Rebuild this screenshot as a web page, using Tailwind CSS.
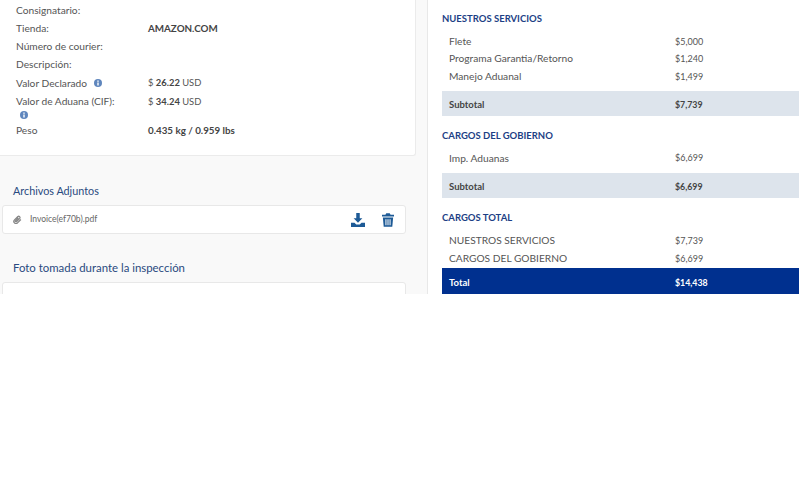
<!DOCTYPE html>
<html lang="es">
<head>
<meta charset="utf-8">
<script src="https://cdn.jsdelivr.net/npm/@tailwindcss/browser@4"></script>
</head>
<body class="bg-white font-['Lato','Noto_Sans',sans-serif] text-[10.2px] text-[#555]">
<div class="flex h-[294px] w-[799px] overflow-hidden">
  <div class="w-[428px] shrink-0 border-r border-[#e8e8e8] bg-[#f9f9f9]">
    <div class="h-[156px] w-[416px] rounded-br-[3px] border-r border-b border-[#ebebeb] bg-white pl-4 pt-[1px]">
      <div class="grid grid-cols-[132px_1fr] auto-rows-[18.3px] items-center">
        <div>Consignatario:</div><div></div>
        <div>Tienda:</div><div class="text-[9.8px] font-bold text-[#444]">AMAZON.COM</div>
        <div>Número de courier:</div><div></div>
        <div>Descripción:</div><div></div>
        <div class="flex items-center gap-[6px]">Valor Declarado
          <svg class="ml-[1px] h-2 w-2" viewBox="0 0 16 16"><circle cx="8" cy="8" r="8" fill="#5f86bd"/><rect x="6.6" y="7" width="2.8" height="6" fill="#fff"/><rect x="6.6" y="3" width="2.8" height="2.6" fill="#fff"/></svg>
        </div>
        <div class="text-[9.4px]">$ <span class="font-bold text-[#444]">26.22</span> USD</div>
        <div>Valor de Aduana (CIF):</div>
        <div class="text-[9.4px]">$ <span class="font-bold text-[#444]">34.24</span> USD</div>
        <div class="-mt-[7px] h-[10px] pl-[4px]">
          <svg class="h-2 w-2" viewBox="0 0 16 16"><circle cx="8" cy="8" r="8" fill="#5f86bd"/><rect x="6.6" y="7" width="2.8" height="6" fill="#fff"/><rect x="6.6" y="3" width="2.8" height="2.6" fill="#fff"/></svg>
        </div><div></div>
        <div class="-mt-[15px]">Peso</div><div class="-mt-[15px] text-[9.8px] font-bold text-[#444]">0.435 kg / 0.959 lbs</div>
      </div>
    </div>
    <h3 class="mt-[27px] pl-[13px] text-[10.8px] leading-[16px] text-[#2a4a80]">Archivos Adjuntos</h3>
    <div class="mt-[6px] ml-[2px] flex h-[29px] w-[404px] items-center rounded-[3px] border border-[#e8e8e8] bg-white pl-[10px] pr-[11px]">
      <svg class="h-[9px] w-[9px] text-[#888]" viewBox="0 0 24 24" fill="none" stroke="currentColor" stroke-width="3.4"><path d="M21 12l-9 9a5.5 5.5 0 0 1-8-8l9-9a3.6 3.6 0 0 1 5 5l-9 9a1.8 1.8 0 0 1-2.5-2.5l8-8"/></svg>
      <span class="ml-[8px] text-[8.5px] text-[#666]">Invoice(ef70b).pdf</span>
      <svg class="ml-auto h-[14px] w-[14px] text-[#1d5a96]" viewBox="0 0 16 16" fill="currentColor"><path d="M6 0h4v6h3l-5 5-5-5h3z"/><path d="M0 11h4l2 2h4l2-2h4v5H0z"/></svg>
      <svg class="ml-[17px] h-[14px] w-[12px] text-[#1d5a96]" viewBox="0 0 14 16" fill="currentColor"><path d="M5 0h4l1 2h4v2H0V2h4z"/><path fill-rule="evenodd" d="M1 5h12l-1 11H2zm3 2v7h1.2V7zm2.4 0v7h1.2V7zm2.4 0v7H10V7z"/></svg>
    </div>
    <h3 class="mt-[26px] pl-[13px] text-[11.4px] leading-[16px] text-[#2a4a80]">Foto tomada durante la inspección</h3>
    <div class="mt-[6px] ml-[2px] h-[40px] w-[404px] rounded-[3px] border border-[#e8e8e8] bg-white"></div>
  </div>
  <div class="flex-1 pl-[14px] pt-[12px]">
    <h4 class="text-[9.5px] leading-[13px] font-bold text-[#1d3f85]">NUESTROS SERVICIOS</h4>
    <div class="mt-[8px] grid grid-cols-[226px_1fr] auto-rows-[17.4px] items-center pl-[7px]">
      <div>Flete</div><div class="text-[9px]">$5,000</div>
      <div>Programa Garantia/Retorno</div><div class="text-[9px]">$1,240</div>
      <div>Manejo Aduanal</div><div class="text-[9px]">$1,499</div>
    </div>
    <div class="mt-[6px] grid h-[25px] grid-cols-[226px_1fr] items-center bg-[#dde4ec] pl-[7px] pt-[2px] text-[9.5px] font-bold text-[#444]"><div>Subtotal</div><div class="text-[8.8px]">$7,739</div></div>
    <h4 class="mt-[13px] text-[9.5px] leading-[13px] font-bold text-[#1d3f85]">CARGOS DEL GOBIERNO</h4>
    <div class="mt-[7px] grid grid-cols-[226px_1fr] auto-rows-[18px] items-center pl-[7px]">
      <div>Imp. Aduanas</div><div class="text-[9px]">$6,699</div>
    </div>
    <div class="mt-[6px] grid h-[25px] grid-cols-[226px_1fr] items-center bg-[#dde4ec] pl-[7px] pt-[2px] text-[9.5px] font-bold text-[#444]"><div>Subtotal</div><div class="text-[8.8px]">$6,699</div></div>
    <h4 class="mt-[13px] text-[9.5px] leading-[13px] font-bold text-[#1d3f85]">CARGOS TOTAL</h4>
    <div class="mt-[8px] grid grid-cols-[226px_1fr] auto-rows-[17.4px] items-center pl-[7px]">
      <div>NUESTROS SERVICIOS</div><div class="text-[9px]">$7,739</div>
      <div>CARGOS DEL GOBIERNO</div><div class="text-[9px]">$6,699</div>
    </div>
    <div class="mt-[1px] grid h-[26px] grid-cols-[226px_1fr] items-center bg-[#00308f] pl-[7px] pt-[4px] text-[9.5px] font-bold text-white"><div>Total</div><div class="text-[8.8px]">$14,438</div></div>
  </div>
</div>
</body>
</html>
